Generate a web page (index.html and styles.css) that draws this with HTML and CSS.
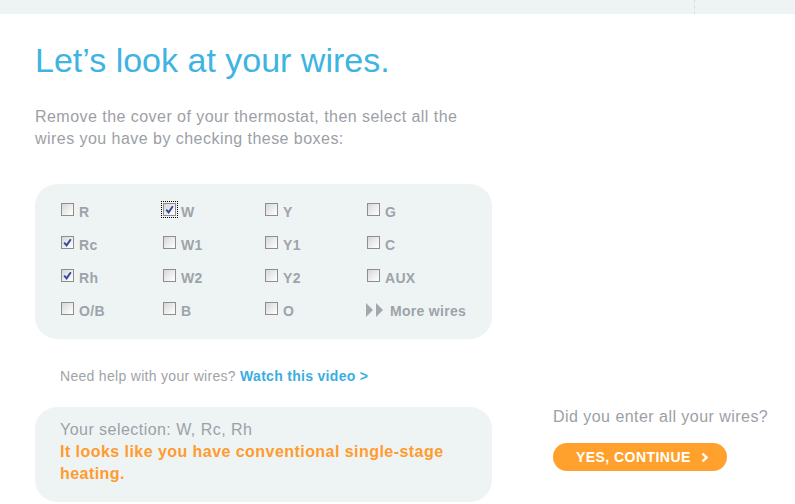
FILE: index.html
```html
<!DOCTYPE html>
<html lang="en">
<head>
<meta charset="utf-8">
<title>Let's look at your wires</title>
<link rel="stylesheet" href="styles.css">
</head>
<body>
<div class="topbar"><div class="topbar-left"></div><div class="topbar-right"></div></div>
<main class="main">
  <h1 class="title">Let’s look at your wires.</h1>
  <p class="intro">Remove the cover of your thermostat, then select all the wires you have by checking these boxes:</p>

  <div class="panel">
    <div class="wire"><span class="cb"></span><span class="lbl">R</span></div>
    <div class="wire"><span class="cb checked focus"><svg viewBox="0 0 11 11" class="tick"><path d="M2.2 5.6 L4.6 8.4 L8.8 2.2"/></svg></span><span class="lbl">W</span></div>
    <div class="wire"><span class="cb"></span><span class="lbl">Y</span></div>
    <div class="wire"><span class="cb"></span><span class="lbl">G</span></div>

    <div class="wire"><span class="cb checked"><svg viewBox="0 0 11 11" class="tick"><path d="M2.2 5.6 L4.6 8.4 L8.8 2.2"/></svg></span><span class="lbl">Rc</span></div>
    <div class="wire"><span class="cb"></span><span class="lbl">W1</span></div>
    <div class="wire"><span class="cb"></span><span class="lbl">Y1</span></div>
    <div class="wire"><span class="cb"></span><span class="lbl">C</span></div>

    <div class="wire"><span class="cb checked"><svg viewBox="0 0 11 11" class="tick"><path d="M2.2 5.6 L4.6 8.4 L8.8 2.2"/></svg></span><span class="lbl">Rh</span></div>
    <div class="wire"><span class="cb"></span><span class="lbl">W2</span></div>
    <div class="wire"><span class="cb"></span><span class="lbl">Y2</span></div>
    <div class="wire"><span class="cb"></span><span class="lbl">AUX</span></div>

    <div class="wire"><span class="cb"></span><span class="lbl">O/B</span></div>
    <div class="wire"><span class="cb"></span><span class="lbl">B</span></div>
    <div class="wire"><span class="cb"></span><span class="lbl">O</span></div>
    <div class="wire more"><svg class="ff" viewBox="0 0 17 14"><polygon points="0,0 7,7 0,14"/><polygon points="10,0 17,7 10,14"/></svg><span class="lbl">More wires</span></div>
  </div>

  <p class="help">Need help with your wires? <a class="help-link" href="#">Watch this video &gt;</a></p>

  <div class="bottom">
    <div class="selection">
      <div class="sel-text">Your selection: W, Rc, Rh</div>
      <div class="sel-result">It looks like you have conventional single-stage heating.</div>
    </div>
    <div class="cta">
      <div class="cta-q">Did you enter all your wires?</div>
      <a class="btn" href="#">YES, CONTINUE <svg class="chev" viewBox="0 0 7 11"><polyline points="1.5,1.5 5.5,5.5 1.5,9.5"/></svg></a>
    </div>
  </div>
</main>
</body>
</html>
```
FILE: styles.css
```css
html, body {
  margin: 0;
  padding: 0;
  background: #ffffff;
  font-family: "Liberation Sans", Arial, sans-serif;
}

.topbar {
  display: flex;
  height: 14px;
  background: #eef4f4;
}
.topbar-left {
  width: 694px;
  border-right: 1px dashed #d6dddd;
}
.topbar-right {
  flex: 1;
}

.main {
  padding-left: 35px;
}

.title {
  margin: 26px 0 0;
  font-size: 34px;
  line-height: 40px;
  font-weight: normal;
  color: #3db4e2;
}

.intro {
  margin: 26px 0 0;
  width: 440px;
  font-size: 16px;
  letter-spacing: 0.46px;
  line-height: 22px;
  color: #9ca0a6;
}

.panel {
  margin-top: 34px;
  width: 457px;
  box-sizing: border-box;
  padding: 19px 0 4px 26px;
  background: #eef4f4;
  border-radius: 22px;
  display: grid;
  grid-template-columns: repeat(4, 102px);
  grid-auto-rows: 33px;
}

.wire {
  display: flex;
  align-items: flex-start;
  gap: 5px;
}

.cb {
  width: 13px;
  height: 13px;
  box-sizing: border-box;
  border: 1px solid #8e8e8e;
  background: linear-gradient(135deg, #d6d6d6 0%, #ececec 50%, #ffffff 100%);
  position: relative;
  flex: none;
}
.cb.focus {
  outline: 1px dotted #000;
  outline-offset: 1px;
}
.tick {
  position: absolute;
  left: 0;
  top: 0;
  width: 11px;
  height: 11px;
}
.tick path {
  fill: none;
  stroke: #34479a;
  stroke-width: 1.9;
}

.lbl {
  margin-top: 1px;
  font-size: 14px;
  letter-spacing: 0.3px;
  line-height: 16px;
  font-weight: bold;
  color: #9ea3aa;
}

.more {
  gap: 7px;
}
.ff {
  width: 17px;
  height: 14px;
  margin-top: 1px;
  margin-left: -1px;
}
.ff polygon {
  fill: #a3a8af;
}

.help {
  margin: 29px 0 0 25px;
  font-size: 14px;
  letter-spacing: 0.3px;
  line-height: 16px;
  color: #a0a3a8;
}
.help-link {
  font-weight: bold;
  color: #3aaee0;
  text-decoration: none;
}

.bottom {
  display: flex;
  align-items: flex-start;
  margin-top: 23px;
}

.selection {
  width: 457px;
  box-sizing: border-box;
  padding: 12px 40px 17px 25px;
  background: #eef4f4;
  border-radius: 22px;
  font-size: 16px;
  letter-spacing: 0.46px;
  line-height: 22px;
  flex: none;
}
.sel-text {
  color: #9ca1a8;
}
.sel-result {
  font-weight: bold;
  letter-spacing: 0.45px;
  color: #ff9b2f;
}

.cta {
  margin-left: 61px;
  margin-top: -1px;
}
.cta-q {
  font-size: 16px;
  letter-spacing: 0.46px;
  line-height: 22px;
  color: #9ca0a6;
}
.btn {
  margin-top: 15px;
  width: 174px;
  height: 28px;
  box-sizing: border-box;
  padding-left: 23px;
  display: flex;
  align-items: center;
  gap: 10px;
  background: #ffa12c;
  border-radius: 14px;
  color: #ffffff;
  font-size: 14px;
  letter-spacing: 0.45px;
  font-weight: bold;
  text-decoration: none;
}
.chev {
  width: 7px;
  height: 11px;
}
.chev polyline {
  fill: none;
  stroke: #ffffff;
  stroke-width: 2.4;
}
```
